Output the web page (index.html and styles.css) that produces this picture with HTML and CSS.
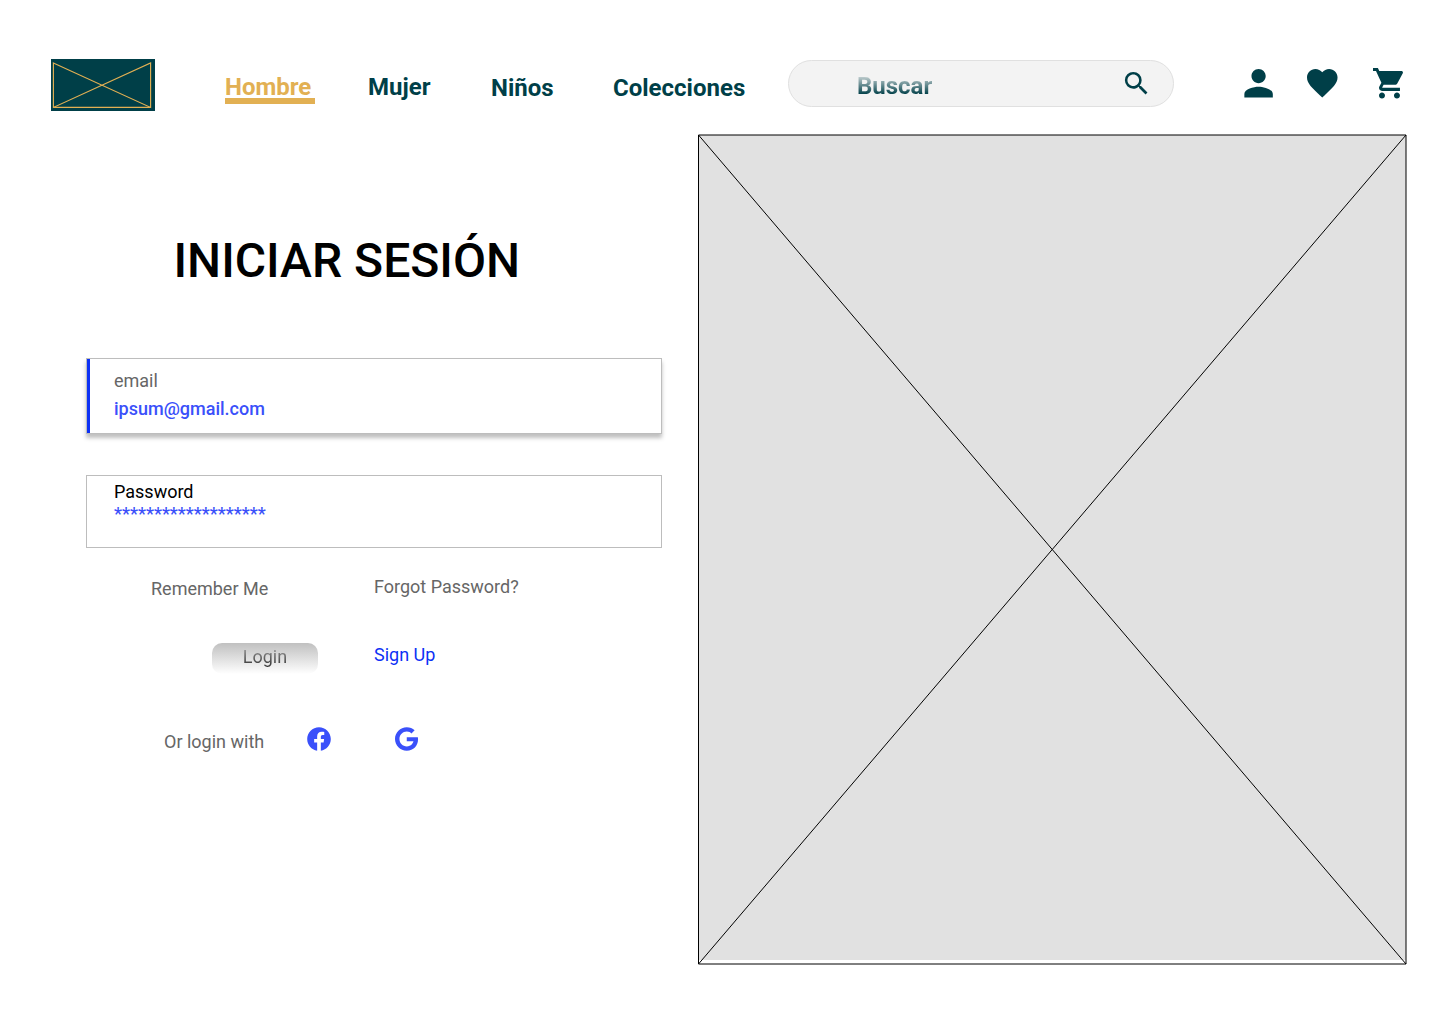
FILE: index.html
```html
<!DOCTYPE html>
<html lang="es">
<head>
<meta charset="utf-8">
<title>Iniciar sesión</title>
<link rel="stylesheet" href="styles.css">
</head>
<body>
<header class="header">
  <a class="logo" href="#" aria-label="Inicio">
    <svg width="104" height="52" viewBox="0 0 104 52" fill="none" stroke="#e2b053" stroke-width="1.15"><path d="M2.4 4 99.6 48.4V4L2.4 48.4Z"/><path d="M2.4 48.4H99.6"/></svg>
  </a>
  <nav class="nav">
    <a class="nav-link active" href="#">Hombre</a>
    <a class="nav-link" href="#">Mujer</a>
    <a class="nav-link low" href="#">Niños</a>
    <a class="nav-link low" href="#">Colecciones</a>
  </nav>
  <div class="search">
    <span class="search-text">Buscar</span>
    <svg class="search-icon" width="31" height="31" viewBox="0 0 24 24" fill="#003f48"><path d="M15.5 14h-.79l-.28-.27A6.471 6.471 0 0 0 16 9.5 6.5 6.5 0 1 0 9.5 16c1.61 0 3.09-.59 4.23-1.57l.27.28v.79l5 4.99L20.49 19l-4.99-5zm-6 0C7.01 14 5 11.99 5 9.5S7.01 5 9.5 5 14 7.01 14 9.5 11.99 14 9.5 14z"/></svg>
  </div>
  <div class="actions">
    <svg width="29" height="29" viewBox="3.800 4 16.300 16.300" fill="#003f48"><path d="M12 12c2.21 0 4-1.79 4-4s-1.790-4-4-4-4 1.790-4 4 1.790 4 4 4zm0 2c-2.670 0-8 1.340-8 4v2h16v-2c0-2.660-5.330-4-8-4z"/></svg>
    <svg width="31" height="29" viewBox="2 3 20.300 18.700" preserveAspectRatio="none" fill="#003f48"><path d="M12 21.350l-1.450-1.320C5.400 15.360 2 12.280 2 8.500 2 5.420 4.420 3 7.500 3c1.740 0 3.410.81 4.500 2.090C13.090 3.810 14.760 3 16.500 3 19.580 3 22 5.420 22 8.500c0 3.780-3.400 6.860-8.550 11.540L12 21.350z"/></svg>
    <svg class="cart" width="31" height="31" viewBox="1 2 20.700 20.300" preserveAspectRatio="none" fill="#003f48"><path d="M7 18c-1.100 0-1.990.9-1.990 2s.89 2 1.990 2 2-.9 2-2-.9-2-2-2zM1 2v2h2l3.600 7.590-1.350 2.450c-.16.28-.25.61-.25.960 0 1.100.9 2 2 2h12v-2H7.420c-.14 0-.25-.11-.25-.25l.03-.12.9-1.630h7.450c.75 0 1.410-.41 1.750-1.030l3.580-6.490c.08-.14.12-.31.12-.48 0-.55-.45-1-1-1H5.210l-.94-2H1zm16 16c-1.100 0-1.990.9-1.990 2s.89 2 1.990 2 2-.9 2-2-.9-2-2-2z"/></svg>
  </div>
</header>
<main class="main">
  <form class="login">
    <h1 class="title">INICIAR SESIÓN</h1>
    <div class="field field-email">
      <span class="label">email</span>
      <span class="value">ipsum@gmail.com</span>
    </div>
    <div class="field field-password">
      <span class="label">Password</span>
      <span class="value">*******************</span>
    </div>
    <div class="row options">
      <span class="remember">Remember Me</span>
      <a class="forgot" href="#">Forgot Password?</a>
    </div>
    <div class="row buttons">
      <button class="submit" type="button"><span>Login</span></button>
      <a class="signup" href="#">Sign Up</a>
    </div>
    <div class="row social">
      <span class="social-text">Or login with</span>
      <svg width="24" height="24" viewBox="-.2 -.2 24.400 24.400" fill="#3a50fa"><path d="M24 12.073C24 5.405 18.627 0 12 0S0 5.405 0 12.073C0 18.100 4.388 23.094 10.125 24v-8.437H7.078v-3.490h3.047V9.413c0-3.026 1.792-4.697 4.533-4.697 1.312 0 2.686.236 2.686.236v2.971h-1.513c-1.491 0-1.956.93-1.956 1.886v2.264h3.328l-.532 3.490h-2.796V24C19.612 23.094 24 18.100 24 12.073z"/></svg>
      <svg class="google" width="24" height="24" viewBox="0.240 -.3 24.500 24.600" preserveAspectRatio="none" fill="#3a50fa"><path d="M12.240 10.285V14.400h6.806c-.275 1.765-2.056 5.174-6.806 5.174-4.095 0-7.439-3.389-7.439-7.574s3.345-7.574 7.439-7.574c2.330 0 3.891.989 4.785 1.849l3.254-3.138C18.189 1.186 15.479 0 12.240 0c-6.635 0-12 5.365-12 12s5.365 12 12 12c6.926 0 11.520-4.869 11.520-11.726 0-.788-.085-1.390-.189-1.989H12.240z"/></svg>
    </div>
  </form>
  <svg class="hero" width="710" height="832" viewBox="0 0 710 832" fill="none">
    <path d="M1 2H709V827H1Z" fill="#e1e1e1"/>
    <path d="M1.500 2H709V831H1.500Z" stroke="#000"/>
    <path d="M1.500 2 709 831M709 2 1.500 831" stroke="#000"/>
  </svg>
</main>
</body>
</html>
```
FILE: styles.css
```css
* { box-sizing: border-box; }
body {
  margin: 0;
  height: 1024px;
  overflow: hidden;
  background: #fff;
  font-family: Roboto, "Liberation Sans", sans-serif;
  font-size: 18px;
  line-height: 21px;
  color: #666;
}
a { color: inherit; text-decoration: none; }
svg { display: block; flex: none; }

.header {
  display: flex;
  align-items: flex-start;
  height: 133px;
  padding: 59px 0 0 51px;
}
.logo { width: 104px; height: 52px; margin-right: 70px; background: #003f48; }
.nav {
  display: grid;
  grid-template-columns: 143px 123px 122px 175px;
  align-items: start;
  padding-top: 14px;
  font-size: 24px;
  line-height: 28px;
  font-weight: 700;
  color: #003f48;
}
.nav-link { justify-self: start; }
.nav-link.low { margin-top: 1px; }
.nav-link.active {
  width: 90px;
  height: 31px;
  color: #e2b053;
  background: linear-gradient(#e2b053, #e2b053) 0 100% / 100% 6px no-repeat;
}
.search {
  display: flex;
  align-items: flex-start;
  justify-content: space-between;
  width: 386px;
  height: 47px;
  margin-top: 1px;
  padding: 11px 21px 0 68px;
  border: 1px solid #e0e0e0;
  border-radius: 24px;
  background: #f3f3f3;
}
.search-text {
  font-size: 24px;
  line-height: 28px;
  font-weight: 700;
  color: transparent;
  background: linear-gradient(rgba(0, 63, 72, 0) 0%, #003f48 80%);
  background-clip: text;
  -webkit-background-clip: text;
}
.search-icon { margin-top: -4px; }
.actions { display: flex; gap: 34px; padding: 10px 0 0 70px; }
.cart { margin: -1px 0 0 1px; }

.main { display: flex; }
.login { width: 697px; padding: 100px 0 0 86px; }
.title {
  margin: 0 0 69px 87.5px;
  font-size: 48px;
  line-height: 56px;
  font-weight: 500;
  color: #000;
}
.field {
  display: flex;
  flex-direction: column;
  width: 576px;
  padding-left: 27px;
  border: 1px solid #bdbdbd;
  background: #fff;
}
.field-email {
  height: 76px;
  padding-top: 11px;
  gap: 7px;
  background: linear-gradient(#0d31f5, #0d31f5) 0 0 / 3px 100% no-repeat #fff;
  box-shadow: 0 4px 4px rgba(0, 0, 0, .25);
}
.field-password { height: 73px; margin-top: 41px; padding-top: 5px; gap: 1px; }
.field-password .label { color: #000; }
.value { font-weight: 500; color: #3a50fa; }
.row { display: flex; align-items: flex-start; }
.options { padding: 28px 0 0 65px; }
.remember { width: 223px; margin-top: 2px; }
.buttons { padding: 44px 0 0 126px; }
.submit {
  width: 106px;
  height: 31px;
  margin-right: 56px;
  padding: 3px 0 7px;
  border: 0;
  border-radius: 10px;
  background: linear-gradient(#c0c0c0, #fff);
  font: inherit;
}
.submit span {
  display: block;
  color: transparent;
  background: linear-gradient(#a0a0a0, #333);
  background-clip: text;
  -webkit-background-clip: text;
}
.signup { margin-top: 1px; color: #0d31f5; }
.social { padding: 53px 0 0 78px; }
.social-text { width: 143px; margin-top: 4px; }
.google { margin-left: 64px; }
```
